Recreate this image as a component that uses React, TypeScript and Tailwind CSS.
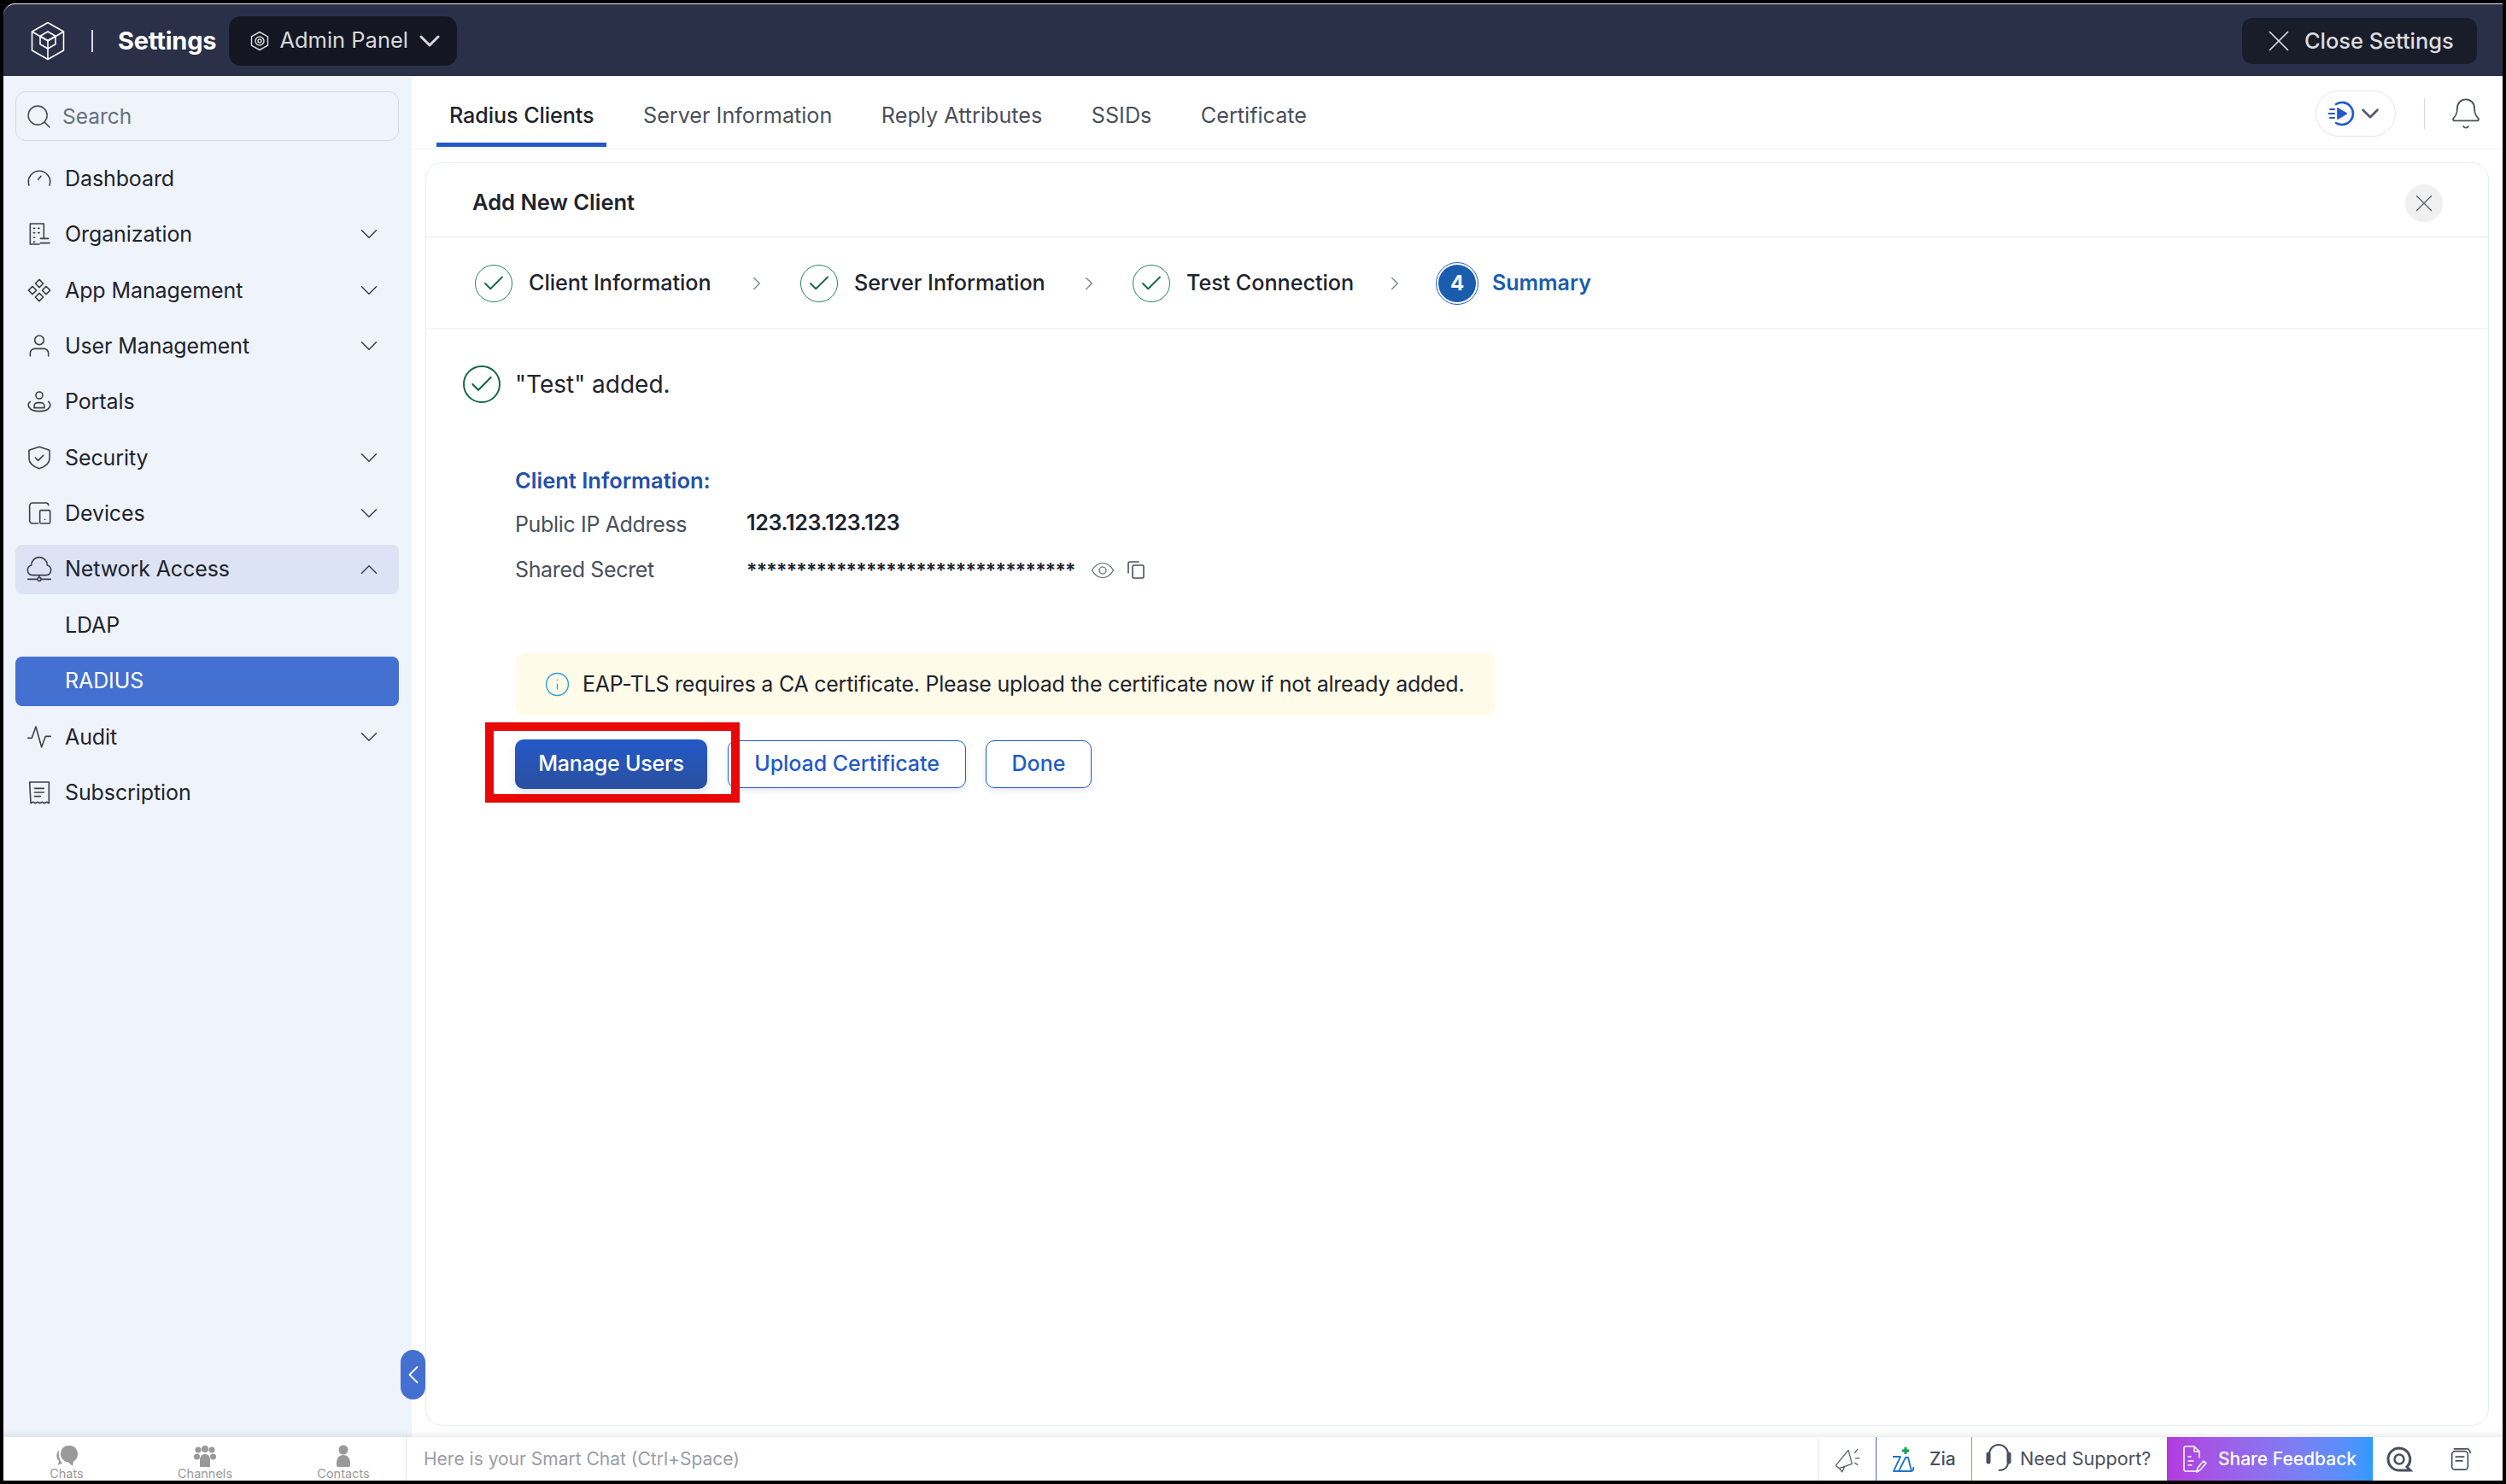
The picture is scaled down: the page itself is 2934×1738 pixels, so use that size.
import { Bell, Check, ChevronDown, ChevronLeft, ChevronRight, ChevronUp, Info, Search, X } from 'lucide-react';
import type { ReactNode } from 'react';

const stroke = { fill: 'none', stroke: 'currentColor', strokeWidth: 1.2, strokeLinecap: 'round', strokeLinejoin: 'round' } as const;

const icons: Record<string, ReactNode> = {
    dashboard: <path d="M3 18a9.500 9.500 0 1 1 18 0M11 13l2.500-3" />,
    organization: <path d="M4 21V3h12v13M4 21h8M7 7h1M11 7h1M7 11h1M11 11h1M7 15h1M7 19h1M13 16h7M13 20h8" />,
    app: <path d="M12 2.500l3.500 3.500-3.500 3.500L8.500 6zM6 8.500L9.500 12 6 15.500 2.500 12zM18 8.500l3.500 3.500-3.500 3.500-3.500-3.500zM12 14.500l3.500 3.500-3.500 3.500L8.500 18z" />,
    user: <path d="M12 3a4 4 0 1 0 0 8 4 4 0 0 0 0-8zM4 21v-2.500a4 4 0 0 1 4-4h8a4 4 0 0 1 4 4V21" />,
    portals: <path d="M12 3a3 3 0 1 0 0 6 3 3 0 0 0 0-6zM7.500 17v-1.500a3 3 0 0 1 3-3h3a3 3 0 0 1 3 3V17M4 11.500c-3 2.500-2 8.500 8 8.500s11-6 8-8.500M7.500 17h9" />,
    security: <path d="M12 2.500l9 3v7c0 4.500-4 7.500-9 9-5-1.500-9-4.500-9-9v-7zM8.500 12l2.500 2.500 4.500-4.500" />,
    devices: <path d="M11 21H6a2.500 2.500 0 0 1-2.500-2.500v-13A2.500 2.500 0 0 1 6 3h12.500a2 2 0 0 1 1.500 2M13.500 9.500h7a1 1 0 0 1 1 1V20a1 1 0 0 1-1 1h-7a1 1 0 0 1-1-1v-9.500a1 1 0 0 1 1-1zM17 17.500v.01" />,
    network: <path d="M6 17a4.500 4.500 0 0 1-1-8.800 7 7 0 0 1 14 0A4.500 4.500 0 0 1 18 17H6zM2 20.500h8M14 20.500h8M12 17v2M12 19a1.500 1.500 0 1 0 0 3 1.500 1.500 0 0 0 0-3z" />,
    audit: <path d="M2 13h3.500L9 3l5 18 3.500-9.500H22" />,
    subscription: <path d="M3.500 3h17v18.500l-2-1-2 1-2-1-2 1-2-1-2 1-2-1-2 1zM8 8.500h8M8 12h8M8 15.500h5" />,
};

type NavItem = { label: string; icon?: string; caret?: 'down' | 'up'; state?: 'open' | 'active' };

const navItems: NavItem[] = [
    { label: 'Dashboard', icon: 'dashboard' },
    { label: 'Organization', icon: 'organization', caret: 'down' },
    { label: 'App Management', icon: 'app', caret: 'down' },
    { label: 'User Management', icon: 'user', caret: 'down' },
    { label: 'Portals', icon: 'portals' },
    { label: 'Security', icon: 'security', caret: 'down' },
    { label: 'Devices', icon: 'devices', caret: 'down' },
    { label: 'Network Access', icon: 'network', caret: 'up', state: 'open' },
    { label: 'LDAP' },
    { label: 'RADIUS', state: 'active' },
    { label: 'Audit', icon: 'audit', caret: 'down' },
    { label: 'Subscription', icon: 'subscription' },
];

const tabs = ['Radius Clients', 'Server Information', 'Reply Attributes', 'SSIDs', 'Certificate'];

const steps = [
    { label: 'Client Information', width: 'w-[216px]' },
    { label: 'Server Information', width: 'w-[224px]' },
    { label: 'Test Connection', width: 'w-[193px]' },
];

const Logo = () => (
    <svg viewBox="0 0 40 46" className="h-[46px] w-[40px] text-white" {...stroke} strokeWidth={1.6}>
        <path d="M20 1.500L38.500 12v22L20 44.500 1.500 34V12zM1.500 12L20 23l18.500-11M20 23v21.500" />
        <path d="M20 12l9 5.200v9.600L20 32l-9-5.200v-9.600zM11 17.200l9 5.300 9-5.300" />
    </svg>
);

const SideNav = () => (
    <aside className="flex w-[478px] shrink-0 flex-col bg-[#eff3fb] pl-[14px] pr-[15px] pt-[18px]">
        <div className="flex h-[58px] items-center rounded-[12px] border border-[#d5d9e0] pl-[10px] text-[#677080]">
            <Search size={33} strokeWidth={1.1} className="shrink-0 text-[#4a505c]" />
            <span className="ml-[11px] text-[24.500px]">Search</span>
        </div>
        <nav className="mt-[15px] flex flex-col gap-[7.4px]">
            {navItems.map((item) => (
                <div
                    key={item.label}
                    className={`flex h-[58px] items-center rounded-[8px] pl-[16px] pr-[18px] text-[25px] tracking-[-0.100px] ${
                        item.state === 'active'
                            ? 'bg-[#4470d1] text-white'
                            : item.state === 'open'
                              ? 'bg-[#dce3f4] text-[#20232e]'
                              : 'text-[#20232e]'
                    }`}
                >
                    <span className="flex w-[24px] justify-center text-[#3a3f4c]">
                        {item.icon && (
                            <svg viewBox="0 0 24 24" className="h-[32px] w-[32px] shrink-0" {...stroke}>
                                {icons[item.icon]}
                            </svg>
                        )}
                    </span>
                    <span className="ml-[18px] flex-1 pt-[1px]">{item.label}</span>
                    {item.caret === 'down' && <ChevronDown size={34} strokeWidth={1.100} className="text-[#3a3f4c]" />}
                    {item.caret === 'up' && <ChevronUp size={34} strokeWidth={1.100} className="text-[#3a3f4c]" />}
                </div>
            ))}
        </nav>
    </aside>
);

const StepDone = ({ label, width }: { label: string; width: string }) => (
    <div className="flex items-center">
        <span className="flex h-[44px] w-[44px] items-center justify-center rounded-full border-[1.500px] border-[#1f8a56] text-[#12693f]">
            <Check size={30} strokeWidth={1.500} />
        </span>
        <span className={`ml-[19px] whitespace-nowrap text-[25.200px] font-medium tracking-[-0.050px] text-[#20232e] ${width}`}>{label}</span>
        <ChevronRight size={26} strokeWidth={1.400} className="mx-[38px] text-[#858b96]" />
    </div>
);

const App = () => {
    return (
        <div className="h-[1738px] w-[2934px] overflow-hidden bg-black pb-[4px] pl-[4px] pr-[4px] pt-[4px] font-['Inter',sans-serif]">
            <div className="relative flex h-full flex-col overflow-hidden rounded-tl-[14px] border-t border-[#e8e8e8] bg-white">
                <header className="flex h-[84px] shrink-0 items-center justify-between bg-[#2a3048] pr-[30px]">
                    <div className="flex items-center pt-[1px]">
                        <div className="ml-[32px]">
                            <Logo />
                        </div>
                        <span className="ml-[31px] h-[26px] w-[2px] bg-[#d8dae0]" />
                        <span className="ml-[29px] text-[29px] font-bold tracking-[-0.200px] text-white">Settings</span>
                        <div className="ml-[15px] flex h-[58px] w-[267px] items-center rounded-[14px] bg-[#141722] pl-[24px] text-[#d8d9dd]">
                            <svg viewBox="0 0 24 24" className="h-[26px] w-[24px] shrink-0" {...stroke} strokeWidth={1.500}>
                                <path d="M12 1.500l9.500 5.300v10.400L12 22.500l-9.500-5.300V6.800z" />
                                <circle cx="12" cy="12" r="5" />
                                <circle cx="12" cy="12" r="2" />
                            </svg>
                            <span className="ml-[11px] whitespace-nowrap text-[25.500px]">Admin Panel</span>
                            <ChevronDown size={40} strokeWidth={1.800} className="ml-[5px] shrink-0" />
                        </div>
                    </div>
                    <div className="mt-[2px] flex h-[54px] w-[275px] items-center rounded-[12px] bg-[#191d2a] pl-[22px] text-[#dcdde0]">
                        <X size={42} strokeWidth={1} className="shrink-0" />
                        <span className="ml-[9px] whitespace-nowrap text-[25.400px] font-medium">Close Settings</span>
                    </div>
                </header>

                <div className="flex min-h-0 flex-1">
                    <SideNav />
                    <main className="flex min-w-0 flex-1 flex-col">
                        <div className="flex h-[86px] shrink-0 items-stretch justify-between border-b border-[#edf0f4] pl-[29px] pr-[23px]">
                            <div className="flex gap-[27.500px]">
                                {tabs.map((tab, i) => (
                                    <div
                                        key={tab}
                                        className={`flex h-[83px] items-center border-b-[5px] px-[15px] pt-[16px] text-[25.200px] ${
                                            i === 0 ? 'border-[#2359c8] font-medium tracking-[-0.100px] text-[#20232e]' : 'border-transparent text-[#4a4f5c]'
                                        }`}
                                    >
                                        {tab}
                                    </div>
                                ))}
                            </div>
                            <div className="flex items-center pt-[3px]">
                                <div className="flex h-[54px] w-[94px] items-center justify-center gap-[1px] rounded-full border border-[#e3e5ea]">
                                    <svg viewBox="0 0 32 32" className="h-[32px] w-[32px] shrink-0 text-[#2359c8]" fill="none" stroke="currentColor" strokeWidth="2.600" strokeLinecap="round">
                                        <path d="M10 5a13 13 0 1 1 0 22" />
                                        <path d="M12 9.500l11 6.500-11 6.500z" fill="currentColor" strokeWidth="1" />
                                        <path d="M3 11h5M1.500 16H8M3 21h5" strokeWidth="2" />
                                    </svg>
                                    <ChevronDown size={34} strokeWidth={1.900} className="shrink-0 text-[#555a66]" />
                                </div>
                                <span className="ml-[33px] h-[36px] w-px bg-[#d5d8dd]" />
                                <Bell size={40} strokeWidth={1.100} className="ml-[28px] shrink-0 text-[#4a505c]" />
                            </div>
                        </div>

                        <section className="mx-[16px] mb-[13px] mt-[15px] flex min-h-0 flex-1 flex-col rounded-[20px] border border-[#e6ecf7]">
                            <div className="flex h-[87px] shrink-0 items-center justify-between border-b border-[#e4e6ea] pl-[54px] pr-[53px] pt-[7px]">
                                <h1 className="text-[25.500px] font-semibold text-[#20232e]">Add New Client</h1>
                                <span className="flex h-[44px] w-[44px] items-center justify-center rounded-full bg-[#f0f0f0] text-[#5a5f6a]">
                                    <X size={34} strokeWidth={0.900} className="shrink-0" />
                                </span>
                            </div>

                            <div className="flex h-[107px] shrink-0 items-center border-b border-[#eef0f3] pl-[57px] pt-[1px]">
                                {steps.map((step) => (
                                    <StepDone key={step.label} label={step.label} width={step.width} />
                                ))}
                                <span className="-ml-[3px] flex h-[50px] w-[50px] items-center justify-center rounded-full border-[1.500px] border-[#2359c8] p-[2px]">
                                    <span className="flex h-full w-full items-center justify-center rounded-full bg-[#1a5cad] text-[24px] font-bold text-white">4</span>
                                </span>
                                <span className="ml-[16px] text-[25px] font-semibold text-[#1a5cad]">Summary</span>
                            </div>

                            <div className="relative flex-1 pl-[104px]">
                                <div className="-ml-[61px] mt-[43px] flex items-center">
                                    <span className="flex h-[44px] w-[44px] items-center justify-center rounded-full border-[2px] border-[#12693f] text-[#12693f]">
                                        <Check size={32} strokeWidth={1.600} className="shrink-0" />
                                    </span>
                                    <span className="ml-[17px] text-[28px] text-[#20232e]">"Test" added.</span>
                                </div>

                                <h2 className="mt-[75px] text-[25.500px] font-semibold leading-[32px] text-[#2350ac]">Client Information:</h2>
                                <div className="mt-[20px] flex h-[32px] items-center text-[25px] tracking-[-0.350px] text-[#4a4f5c]">
                                    <span className="w-[271px]">Public IP Address</span>
                                    <span className="-mt-[5px] font-semibold tracking-[-0.300px] text-[#20232e]">123.123.123.123</span>
                                </div>
                                <div className="mt-[21px] flex h-[32px] items-center text-[25px] tracking-[-0.350px] text-[#4a4f5c]">
                                    <span className="w-[271px]">Shared Secret</span>
                                    <span className="w-[386px] whitespace-nowrap text-[23px] font-semibold tracking-[-0.750px] text-[#20232e]">
                                        *********************************
                                    </span>
                                    <svg viewBox="0 0 28 24" className="-mt-[1px] ml-[17px] h-[24px] w-[28px] text-[#5a5f6a]" {...stroke}>
                                        <path d="M1.500 12C5 6 9 3.500 14 3.500S23 6 26.500 12C23 18 19 20.500 14 20.500S5 18 1.500 12z" />
                                        <circle cx="14" cy="12" r="4" />
                                    </svg>
                                    <svg viewBox="0 0 24 24" className="-mt-[3px] ml-[13px] h-[24px] w-[24px] text-[#4a4f5c]" {...stroke} strokeWidth={1.600}>
                                        <rect x="8" y="7" width="13" height="15" rx="1.500" />
                                        <path d="M15 3H5a2 2 0 0 0-2 2v11" />
                                    </svg>
                                </div>

                                <div className="mt-[81px] flex h-[73px] w-[1148px] items-center rounded-[12px] bg-[#fefbe8] pl-[34px] text-[25px] tracking-[-0.250px] text-[#20232e]">
                                    <Info size={31} strokeWidth={1.100} className="shrink-0 text-[#2f9fe0]" />
                                    <span className="ml-[14px] whitespace-nowrap">
                                        EAP-TLS requires a CA certificate. Please upload the certificate now if not already added.
                                    </span>
                                </div>

                                <div className="mt-[28px] flex items-center">
                                    <button className="h-[58px] w-[225px] rounded-[10px] bg-gradient-to-b from-[#2359c8] to-[#2a4f9f] text-[25px] font-medium tracking-[-0.200px] text-white shadow-[0_5px_10px_rgba(35,60,120,0.150)]">
                                        Manage Users
                                    </button>
                                    <button className="ml-[24px] h-[56px] w-[279px] rounded-[10px] border border-[#2359c8] bg-white text-[25px] font-medium tracking-[-0.050px] text-[#2359c8] shadow-[0_3px_6px_rgba(35,60,120,0.120)]">
                                        Upload Certificate
                                    </button>
                                    <button className="ml-[23px] h-[56px] w-[124px] rounded-[10px] border border-[#2359c8] bg-white text-[25px] font-medium text-[#2359c8] shadow-[0_3px_6px_rgba(35,60,120,0.120)]">
                                        Done
                                    </button>
                                </div>

                                {/* red annotation box around the first button */}
                                <div className="absolute left-[69px] top-[461px] h-[94px] w-[298px] border-[10px] border-[#e90808]" />
                            </div>
                        </section>
                    </main>
                </div>

                <footer className="flex h-[51px] shrink-0 items-stretch bg-white text-[#8d9199] shadow-[0_-3px_6px_rgba(0,0,0,0.080)]">
                    <div className="flex w-[472px] shrink-0 gap-[42px] border-r border-[#e4e4e4] pl-[14px] pt-[9px] text-[#999]">
                        <div className="flex w-[120px] flex-col items-center text-[14.500px] leading-[15px]">
                            <svg viewBox="0 0 28 26" className="h-[26px] w-[28px]" fill="currentColor">
                                <path d="M17 1c6 0 10 4 10 10 0 4-2 7-5 8.500l-1 5.500-5-4.500C11 20 7 16 7 11 7 5 11 1 17 1z" />
                                <path d="M5 6C2 9 1 15 5 19l-1 5 5-2.500c-3-3-5-9-4-15.500z" />
                            </svg>
                            <span>Chats</span>
                        </div>
                        <div className="flex w-[120px] flex-col items-center text-[14.500px] leading-[15px]">
                            <svg viewBox="0 0 28 26" className="h-[26px] w-[28px]" fill="currentColor">
                                <circle cx="6" cy="6" r="3.500" />
                                <circle cx="22" cy="6" r="3.500" />
                                <circle cx="14" cy="5" r="4" />
                                <path d="M8 26v-8c0-4 2-7 6-7s6 3 6 7v8z" />
                                <circle cx="4.500" cy="14" r="3.500" />
                                <circle cx="23.500" cy="14" r="3.500" />
                            </svg>
                            <span>Channels</span>
                        </div>
                        <div className="flex w-[120px] flex-col items-center text-[14.500px] leading-[15px]">
                            <svg viewBox="0 0 28 26" className="h-[26px] w-[28px]" fill="currentColor">
                                <circle cx="14" cy="6" r="5.500" />
                                <path d="M8 26c-2 0-2-2-2-4 0-6 3-10 8-10s8 4 8 10c0 2 0 4-2 4z" />
                            </svg>
                            <span>Contacts</span>
                        </div>
                    </div>
                    <div className="flex flex-1 items-center pl-[20px] pt-[1px] text-[21px] text-[#9a9da3]">Here is your Smart Chat (Ctrl+Space)</div>
                    <div className="flex w-[67px] shrink-0 items-center justify-center border-l border-[#e4e6ea] text-[#5a5f6a]">
                        <svg viewBox="0 0 32 32" className="h-[34px] w-[34px]" {...stroke}>
                            <path d="M3 23L17 6l4 15-14 5zM7 26l3 4 3-6M24 9l3-4M25 15h4M24 20l3 2" />
                        </svg>
                    </div>
                    <div className="flex w-[112px] shrink-0 items-center border-l border-[#5560e0] pl-[17px] text-[#4a4f5c]">
                        <svg viewBox="0 0 30 36" className="h-[36px] w-[30px]" fill="none" stroke="#1f73c9" strokeWidth="1.800" strokeLinejoin="round">
                            <path d="M2 15h9L3 32h9M17 16l-8 16h15l-4-16zM22 32c3 0 5-1 4-5" />
                            <path d="M17 4v8M13 8h8" stroke="#12a150" strokeWidth="3" />
                        </svg>
                        <span className="ml-[15px] text-[21px] font-medium">Zia</span>
                    </div>
                    <div className="flex w-[229px] shrink-0 items-center border-l border-[#e08a3c] pl-[16px] text-[#4a4f5c]">
                        <svg viewBox="0 0 30 36" className="h-[36px] w-[30px] shrink-0" fill="none" stroke="currentColor" strokeWidth="2">
                            <path d="M4 20v-8a11 11 0 0 1 22 0v8" />
                            <path d="M3 12v9M27 12v9" strokeWidth="5" strokeLinecap="round" />
                            <path d="M26 21c0 7-5 10-11 10" />
                        </svg>
                        <span className="ml-[10px] whitespace-nowrap text-[21.600px]">Need Support?</span>
                    </div>
                    <div className="flex w-[241px] shrink-0 items-center bg-gradient-to-r from-[#b23ade] to-[#2f9aff] pl-[17px] text-white">
                        <svg viewBox="0 0 30 36" className="h-[36px] w-[30px] shrink-0" {...stroke} strokeWidth={1.500}>
                            <path d="M18 32H5a2 2 0 0 1-2-2V5a2 2 0 0 1 2-2h10l6 6v7M15 3v6h6M8 15h3M8 20h6M8 25h4" />
                            <path d="M18 33l1-5 7-8 3 2.500-7 8z" />
                        </svg>
                        <span className="ml-[13px] whitespace-nowrap text-[21px] font-medium">Share Feedback</span>
                    </div>
                    <div className="flex w-[152px] shrink-0 items-center gap-[40px] border-l border-[#d9e3f5] pl-[14px] text-[#4a4f5c]">
                        <svg viewBox="0 0 32 32" className="h-[32px] w-[32px]" fill="none" stroke="currentColor">
                            <path d="M16 3a13 13 0 1 0 0 26h13l-4-4a13 13 0 0 0-9-22z" strokeWidth="3" />
                            <circle cx="16" cy="16" r="5.500" strokeWidth="2.500" />
                        </svg>
                        <svg viewBox="0 0 32 32" className="h-[30px] w-[30px]" {...stroke} strokeWidth={1.800}>
                            <rect x="6" y="6" width="20" height="23" rx="4" />
                            <path d="M9 3h14a5 5 0 0 1 6 5M11 13h10M11 18h8" />
                        </svg>
                    </div>
                </footer>

                {/* sidebar collapse handle, sits over the sidebar edge */}
                <div className="absolute left-[465px] top-[1576px] flex h-[58px] w-[29px] items-center justify-center rounded-full bg-[#4470d1] text-white">
                    <ChevronLeft size={36} strokeWidth={1.200} className="shrink-0" />
                </div>
            </div>
        </div>
    );
};

export default App;
